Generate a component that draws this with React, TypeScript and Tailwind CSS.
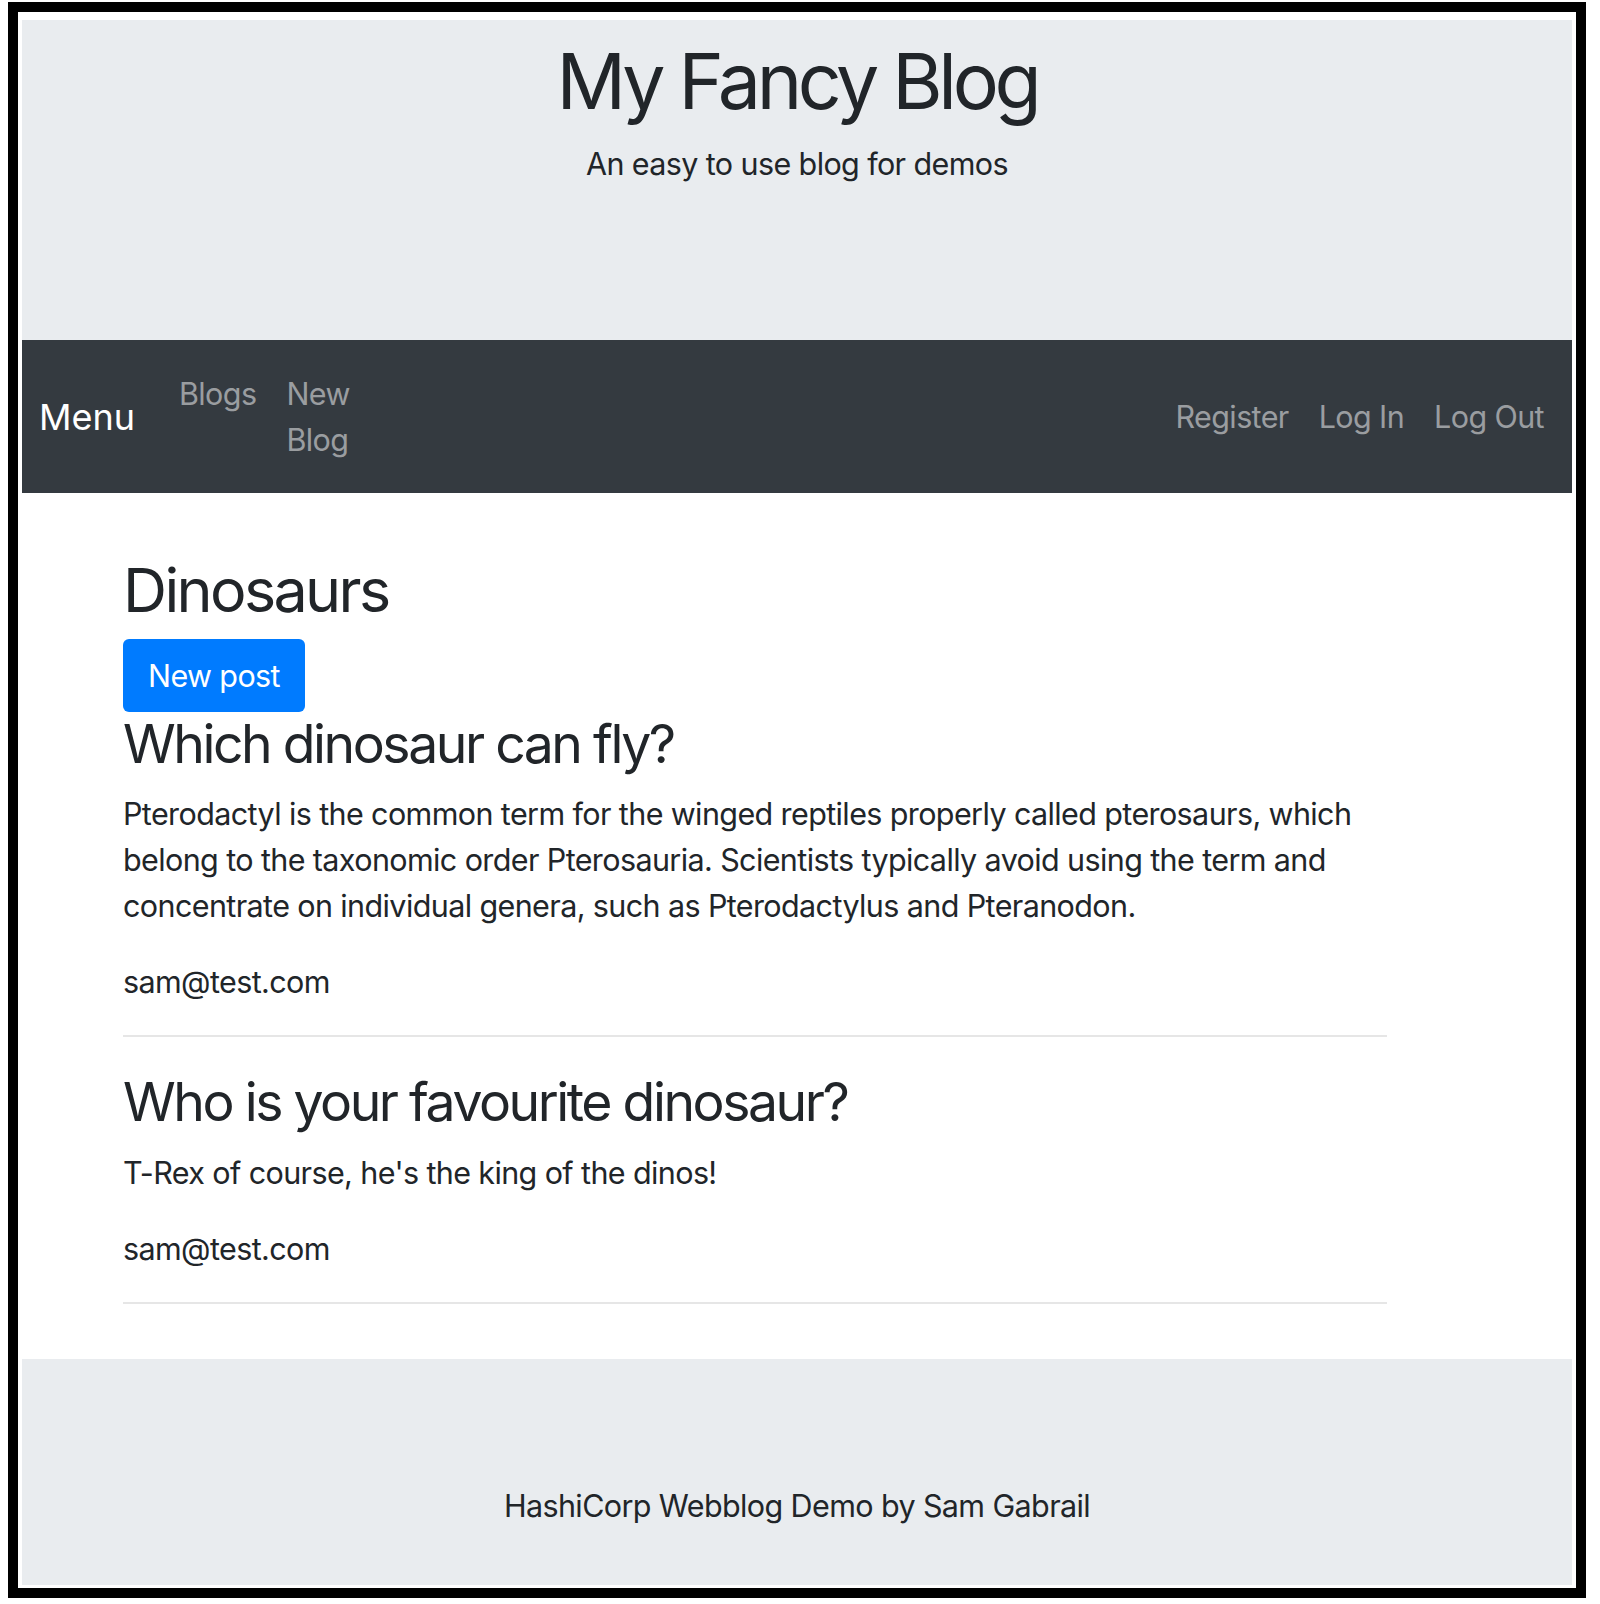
import React from 'react';

type Post = { id: number; title: string; body: string; author: string };

const posts: Post[] = [
  {
    id: 1,
    title: 'Which dinosaur can fly?',
    body: 'Pterodactyl is the common term for the winged reptiles properly called pterosaurs, which belong to the taxonomic order Pterosauria. Scientists typically avoid using the term and concentrate on individual genera, such as Pterodactylus and Pteranodon.',
    author: 'sam@test.com',
  },
  {
    id: 2,
    title: 'Who is your favourite dinosaur?',
    body: "T-Rex of course, he's the king of the dinos!",
    author: 'sam@test.com',
  },
];

const NavLink: React.FC<{ children: React.ReactNode }> = ({ children }) => (
  <a href="#" className="px-[15px] text-[#9a9da0] leading-[46px]">
    {children}
  </a>
);

export default function App() {
  return (
    <div
      className="min-h-screen bg-white pl-[8px] pt-[2px] text-[#212529] text-[30.5px] tracking-[-0.02em]"
      style={{ fontFamily: 'Inter, "Liberation Sans", sans-serif' }}
    >
      <div className="w-[1578px] h-[1596px] border-[10px] border-black bg-white pt-[8px] px-[4px] pb-[3px] flex flex-col">
        <header className="h-[320px] shrink-0 bg-[#e9ecef] pt-[15px] text-center">
          <h1 className="text-[77px] leading-[1.2] tracking-[-0.056em] mb-[14px]">My Fancy Blog</h1>
          <p className="leading-[46px]">An easy to use blog for demos</p>
        </header>

        <nav className="h-[153px] shrink-0 bg-[#343a40] flex items-center pl-[17px] pr-[13px]">
          <a href="#" className="w-[125px] text-white text-[36px] leading-[1.5] tracking-normal">
            Menu
          </a>
          <div className="flex items-start">
            <NavLink>Blogs</NavLink>
            <a href="#" className="px-[15px] text-[#9a9da0] leading-[46px] flex flex-col">
              <span>New</span>
              <span>Blog</span>
            </a>
          </div>
          <div className="ml-auto flex items-center">
            <NavLink>Register</NavLink>
            <NavLink>Log In</NavLink>
            <NavLink>Log Out</NavLink>
          </div>
        </nav>

        <main className="h-[866px] shrink-0 pl-[101px] pt-[61px]">
          <div className="w-[1264px]">
            <h2 className="text-[61px] leading-[1.2] tracking-[-0.043em] mb-[12px]">Dinosaurs</h2>
            <button className="w-[182px] h-[73px] rounded-[6px] bg-[#007bff] text-white leading-[46px]">
              New post
            </button>
            {posts.map((post, i) => (
              <div key={post.id}>
                <h3
                  className={`text-[53.5px] leading-[1.2] tracking-[-0.046em] mb-[15px] ${i > 0 ? 'mt-[33px]' : ''}`}
                >
                  {post.title}
                </h3>
                <p className="leading-[46px] mb-[30px]">{post.body}</p>
                <p className="leading-[46px] mb-[30px]">{post.author}</p>
                <hr className="border-0 h-[2px] bg-[#e6e6e6]" />
              </div>
            ))}
          </div>
        </main>

        <footer className="flex-1 bg-[#e9ecef] pt-[124px] text-center">
          <p className="leading-[46px]">HashiCorp Webblog Demo by Sam Gabrail</p>
        </footer>
      </div>
    </div>
  );
}
